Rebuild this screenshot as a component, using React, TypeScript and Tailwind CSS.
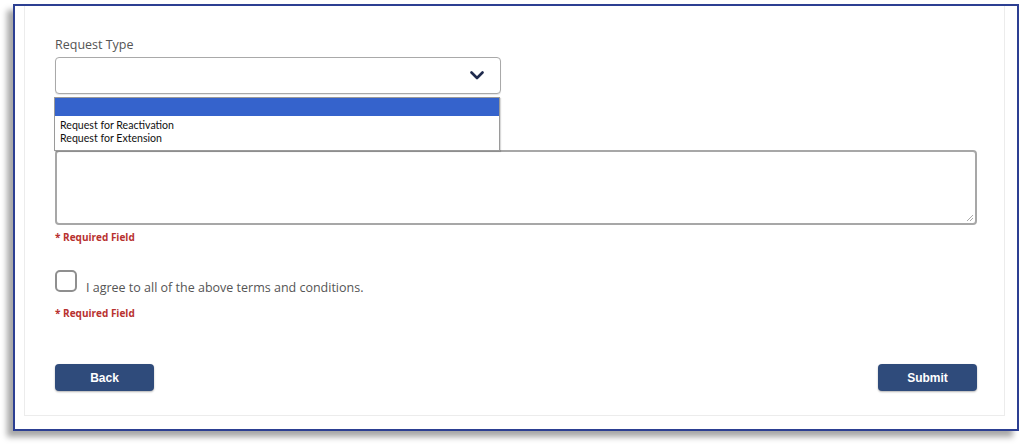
import React from "react";

export default function App() {
  return (
    <div className="w-[1024px] h-[444px] bg-white pt-[4px] pl-[13px]" style={{ fontFamily: '"Open Sans", "Liberation Sans", sans-serif' }}>
      <div className="w-[1006px] h-[427px] border-2 border-[#2c3f92] bg-white shadow-[-6px_6px_6px_rgba(0,0,0,0.35)] flex">
        <div className="ml-[9px] mr-[12px] mb-[13px] flex-1 border-l border-r border-b border-[#ececec] pl-[30px] pr-[27px] pt-[31px] relative">
          <div className="text-[12.5px] leading-[16px] text-[#555]">Request Type</div>
          <div className="relative mt-[4px] w-[446px] h-[37px] border border-[#a9a9a9] rounded-[4px] bg-white flex items-center justify-end pr-[14px] shadow-[0_1px_1px_rgba(0,0,0,0.1)]">
            <svg width="14" height="9" viewBox="0 0 14 9" className="mr-[2px]">
              <path d="M1.5 1.5 L7 7 L12.5 1.5" fill="none" stroke="#1f2a4d" strokeWidth="2.6" strokeLinecap="round" strokeLinejoin="round" />
            </svg>
            <div className="absolute left-[-2px] top-[39px] w-[446px] h-[54px] border border-[#9a9a9a] bg-white z-10 shadow-[1px_1px_1px_rgba(0,0,0,0.15)]">
              <div className="h-[18px] bg-[#3563cc]"></div>
              <div className="pl-[5px] pt-[3px] text-[10.6px] leading-[13px] text-[#111]" style={{ fontFamily: 'Lato, "Open Sans", sans-serif' }}>
                <div>Request for Reactivation</div>
                <div>Request for Extension</div>
              </div>
            </div>
          </div>
          <div className="relative mt-[56px] w-[922px] h-[75px] border-2 border-[#a7a7a7] rounded-[4px] bg-white">
            <svg width="10" height="10" viewBox="0 0 10 10" className="absolute right-[1px] bottom-[1px]">
              <path d="M9 3 L3 9 M9 6 L6 9" stroke="#aaa" strokeWidth="1" />
            </svg>
          </div>
          <div className="mt-[5px] text-[10px] leading-[14px] font-bold text-[#b8312f]">* Required Field</div>
          <div className="mt-[26px] flex items-end h-[22px]">
            <div className="w-[22px] h-[22px] border-2 border-[#8f8f8f] rounded-[5px] bg-white shrink-0"></div>
            <div className="ml-[9px] text-[12.5px] leading-[16px] text-[#555] relative top-[4px]">I agree to all of the above terms and conditions.</div>
          </div>
          <div className="mt-[14px] text-[10px] leading-[14px] font-bold text-[#b8312f]">* Required Field</div>
          <div className="mt-[44px] flex justify-between w-[922px]">
            <button className="w-[99px] h-[27px] bg-[#2f4b7b] rounded-[4px] text-white text-[12px] font-bold shadow-[0_1px_2px_rgba(0,0,0,0.3)]" style={{ fontFamily: '"Liberation Sans", Arial, sans-serif' }}>Back</button>
            <button className="w-[99px] h-[27px] bg-[#2f4b7b] rounded-[4px] text-white text-[12px] font-bold shadow-[0_1px_2px_rgba(0,0,0,0.3)]" style={{ fontFamily: '"Liberation Sans", Arial, sans-serif' }}>Submit</button>
          </div>
        </div>
      </div>
    </div>
  );
}
